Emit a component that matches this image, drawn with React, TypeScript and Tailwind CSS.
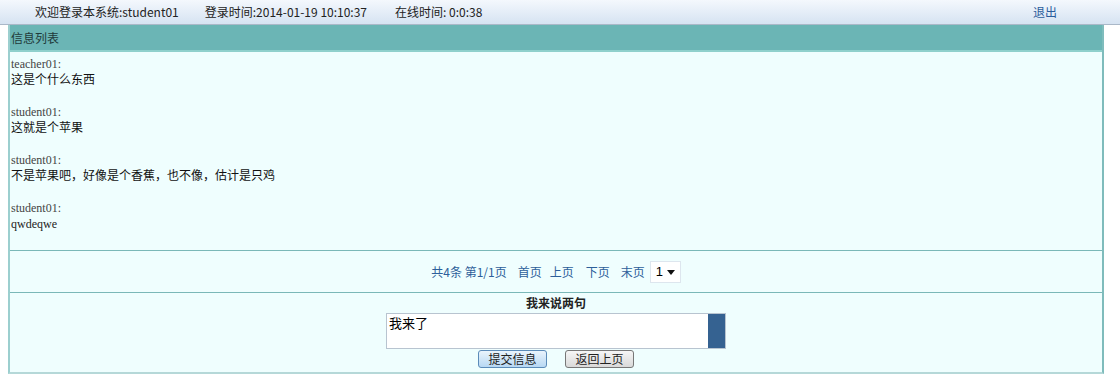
const messages = [
  { user: "teacher01:", text: "这是个什么东西", latin: false },
  { user: "student01:", text: "这就是个苹果", latin: false },
  { user: "student01:", text: "不是苹果吧，好像是个香蕉，也不像，估计是只鸡", latin: false },
  { user: "student01:", text: "qwdeqwe", latin: true },
];

const cjk = "font-['Microsoft_YaHei','Noto_Sans_CJK_SC',sans-serif]";

export default function App() {
  return (
    <div className={`w-[1120px] h-[387px] bg-white text-[12px] ${cjk}`}>
      {/* top bar */}
      <div className="h-[25px] flex items-center bg-gradient-to-b from-[#f4f8fd] to-[#d6e3f2] border-b border-[#aab8c8] text-[#222]">
        <span className="ml-[35px]">欢迎登录本系统:student01</span>
        <span className="ml-[26px]">登录时间:2014-01-19 10:10:37</span>
        <span className="ml-[28px]">在线时间: 0:0:38</span>
        <span className="ml-auto mr-[63px] text-[#2b5c9c]">退出</span>
      </div>

      <div className="ml-[8px] w-[1096px] border-l-2 border-r-2 border-b-2 border-[#9ccfcf] border-r-[#7fbcbc] border-b-[#b5d8d8]">
        <div className="h-[27px] bg-[#6bb5b5] border-b-2 border-[#8fd0cc] flex items-center pl-[1px] text-[#1f3a3a]">
          信息列表
        </div>

        <div className="h-[198px] bg-[#effefe] pt-[5px] pl-[1px]">
          {messages.map((m, i) => (
            <div key={i} className="h-[48px]">
              <div className="font-['Liberation_Serif',serif] text-[12px] leading-[14px] text-[#444]">
                {m.user}
              </div>
              <div
                className={
                  m.latin
                    ? "font-['Liberation_Serif',serif] text-[12px] leading-[16px] text-[#222] mt-[1px]"
                    : "text-[12px] leading-[16px] text-[#111]"
                }
              >
                {m.text}
              </div>
            </div>
          ))}
        </div>

        <div className="h-[42px] bg-[#effefe] border-t border-[#7ab8b8] flex items-center justify-center pt-[1px] text-[#2d5f9a]">
          <span>共4条 第1/1页</span>
          <span className="ml-[11px]">首页</span>
          <span className="ml-[8px]">上页</span>
          <span className="ml-[12px]">下页</span>
          <span className="ml-[11px]">末页</span>
          <div className="ml-[5px] w-[31px] h-[22px] bg-white border border-[#dde6ee] flex items-center justify-between px-[5px] text-black font-['Liberation_Sans',sans-serif] text-[13px]">
            <span>1</span>
            <svg width="8" height="5" viewBox="0 0 8 5">
              <path d="M0 0H8L4 5Z" fill="#111" />
            </svg>
          </div>
        </div>

        <div className="h-[80px] bg-[#effefe] border-t border-[#7ab8b8] flex flex-col items-center">
          <div className="mt-[2px] font-bold text-[12px] leading-[16px] text-[#222]">我来说两句</div>
          <div className="mt-[2px] w-[340px] h-[36px] flex border border-[#b8c4d0] bg-white">
            <div className="flex-1 pl-[2px] pt-[1px] text-[13px] leading-[16px] text-black">我来了</div>
            <div className="w-[17px] bg-[#356291]" />
          </div>
          <div className="mt-[1px] flex gap-[18px]">
            <button className="w-[69px] h-[18px] rounded-[3px] border border-[#5b8bb9] bg-gradient-to-b from-[#eaf4fc] to-[#b7d8f3] text-[12px] leading-[16px] text-[#222]">
              提交信息
            </button>
            <button className="w-[69px] h-[18px] rounded-[3px] border border-[#777] bg-gradient-to-b from-[#f6f6f6] to-[#d9d9d9] text-[12px] leading-[16px] text-[#222]">
              返回上页
            </button>
          </div>
        </div>
      </div>
    </div>
  );
}
